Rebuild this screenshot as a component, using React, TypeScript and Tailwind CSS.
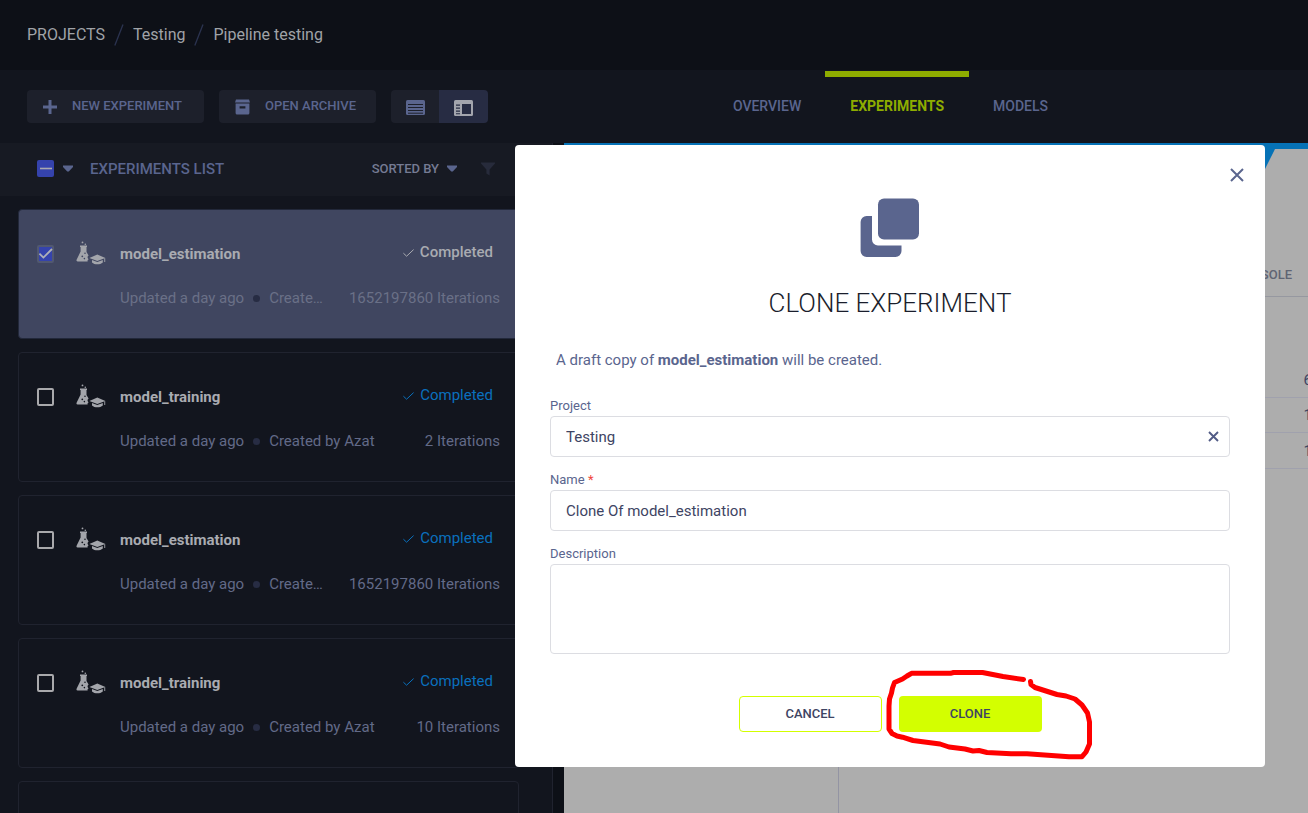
import React, { useEffect, useRef, useState } from "react";

type Experiment = {
  name: string;
  author: string;
  iterations: string;
};

const experiments: Experiment[] = [
  { name: "model_estimation", author: "Create…", iterations: "1652197860 Iterations" },
  { name: "model_training", author: "Created by Azat", iterations: "2 Iterations" },
  { name: "model_estimation", author: "Create…", iterations: "1652197860 Iterations" },
  { name: "model_training", author: "Created by Azat", iterations: "10 Iterations" },
];

function Caret() {
  return (
    <svg width="10" height="7" viewBox="0 0 10 7" aria-hidden="true">
      <path d="M0 0.5H10V2L5.8 6.6H4.2L0 2Z" fill="#5a658e" />
    </svg>
  );
}

function FlaskCapIcon() {
  return (
    <svg width="30" height="24" viewBox="0 0 30 24" fill="#a3a5ab" aria-hidden="true">
      <circle cx="6.5" cy="1.4" r="0.9" />
      <circle cx="9.3" cy="3.2" r="0.8" />
      <path
        fillRule="evenodd"
        d="M4 4.6H11V6H10.5V11L12.6 14.5C11 15.6 11.4 17.4 12.6 18.2L11.6 19.2V20.4H1.6C0.5 20.4 0.2 19.4 0.7 18.4L4.6 10.6V6H4ZM6.3 14.4a0.9 0.9 0 1 0 0 1.8a0.9 0.9 0 1 0 0-1.8ZM9 11.4a0.8 0.8 0 1 0 0 1.6a0.8 0.8 0 1 0 0-1.6ZM8.4 16.8a0.8 0.8 0 1 0 0 1.6a0.8 0.8 0 1 0 0-1.6Z"
      />
      <path d="M13.4 17L21.3 13.6L29.4 17L21.3 20Z" />
      <path d="M16 19L21.3 21L26.8 19V21.4C24 24 18.6 24 16 21.4Z" />
      <path d="M28.3 17.2H29.2V21H28.3Z" />
    </svg>
  );
}

function RowCheckbox({ checked, label, onChange }: { checked: boolean; label: string; onChange: () => void }) {
  return (
    <span className="grid size-[17px] shrink-0">
      <input
        type="checkbox"
        aria-label={label}
        checked={checked}
        onChange={onChange}
        className="col-start-1 row-start-1 m-0 h-[18px] w-[17px] appearance-none rounded-xs border-2 border-[#a9a9ac] checked:border-[#515871] checked:bg-[#3543ad]"
      />
      {checked && (
        <svg className="pointer-events-none col-start-1 row-start-1" width="17" height="17" viewBox="0 0 17 17" aria-hidden="true">
          <path d="M2.4 8.6L6.4 12.6L15 4" fill="none" stroke="#aeb0b8" strokeWidth="1.8" />
        </svg>
      )}
    </span>
  );
}

function ExperimentCard({
  item,
  selected,
  onToggle,
}: {
  item: Experiment;
  selected: boolean;
  onToggle: () => void;
}) {
  return (
    <li
      className={
        selected
          ? "flex h-[130px] shrink-0 rounded-sm border border-[#22283a] bg-[#404660] pt-8 pr-[18px] pl-[18px]"
          : "flex h-[130px] shrink-0 rounded-sm border border-[#20232f] bg-[#12151e] pt-8 pr-[18px] pl-[18px]"
      }
    >
      <div className="pt-[3px]">
        <RowCheckbox checked={selected} label={"Select " + item.name} onChange={onToggle} />
      </div>
      <div className="-mt-px ml-[22px] w-[44px] shrink-0">
        <FlaskCapIcon />
      </div>
      <div className="min-w-0 flex-1">
        <div className="flex items-start justify-between pr-[7px]">
          <h3 className="pt-[2px] text-[15px] leading-5 font-bold text-[#a9abb1]">{item.name}</h3>
          <span
            className={
              selected
                ? "flex items-center gap-[6px] text-[15px] leading-5 font-medium text-[#a9abb1]"
                : "flex items-center gap-[6px] text-[15px] leading-5 text-[#0a70bd]"
            }
          >
            <svg width="11" height="8" viewBox="0 0 11 8" className="mt-[2px]" aria-hidden="true">
              <path d="M0.4 4.2L3.6 7.2L10.6 0.6" fill="none" stroke="currentColor" strokeWidth="1" />
            </svg>
            Completed
          </span>
        </div>
        <div
          className={
            selected
              ? "mt-6 flex items-center text-[15px] leading-5 text-[#6a7087]"
              : "mt-6 flex items-center text-[15px] leading-5 text-[#626a88]"
          }
        >
          <span className="shrink-0">Updated a day ago</span>
          <span className="mx-[9px] size-[7px] shrink-0 rounded-full bg-[#272c43]" />
          <span className="shrink-0">{item.author}</span>
          <span className="ml-auto shrink-0">{item.iterations}</span>
        </div>
      </div>
    </li>
  );
}

function SelectAll() {
  const ref = useRef<HTMLInputElement>(null);
  useEffect(() => {
    if (ref.current) ref.current.indeterminate = true;
  }, []);
  return (
    <span className="grid size-[17px] shrink-0">
      <input
        ref={ref}
        type="checkbox"
        aria-label="Select all experiments"
        className="col-start-1 row-start-1 m-0 size-[17px] appearance-none rounded-xs bg-[#3543ad]"
      />
      <svg className="pointer-events-none col-start-1 row-start-1" width="17" height="17" viewBox="0 0 17 17" aria-hidden="true">
        <path d="M3 8.5H15" stroke="#aaa9b0" strokeWidth="1.6" />
      </svg>
    </span>
  );
}

function Slash() {
  return (
    <svg width="10" height="22" viewBox="0 0 10 22" aria-hidden="true">
      <path d="M0.8 21.5L9 0.5" stroke="#2b3350" strokeWidth="1.3" />
    </svg>
  );
}

function Header() {
  return (
    <header className="h-[70px] shrink-0 bg-[#0d1017] pt-6 pl-[27px]">
      <nav aria-label="Breadcrumb" className="flex items-center gap-[9px] text-[16px] leading-[22px] text-[#a0a3a8]">
        <a href="#projects">PROJECTS</a>
        <Slash />
        <a href="#testing">Testing</a>
        <Slash />
        <a href="#pipeline">Pipeline testing</a>
      </nav>
    </header>
  );
}

function Toolbar() {
  return (
    <div className="flex h-[73px] shrink-0 justify-between bg-[#12151e] pr-[236px] pl-[27px]">
      <div className="flex items-center gap-[15px] text-[13px] font-medium text-[#5a658e]">
        <button type="button" className="flex h-[33px] w-[177px] items-center gap-[15px] rounded-sm bg-[#1d202b] pl-4">
          <svg width="14" height="14" viewBox="0 0 14 14" aria-hidden="true">
            <path d="M7 0V14M0 7H14" stroke="#5a658e" strokeWidth="3" />
          </svg>
          <span className="pb-[2px]">NEW EXPERIMENT</span>
        </button>
        <button type="button" className="flex h-[33px] w-[157px] items-center gap-[15px] rounded-sm bg-[#1d202b] pl-4">
          <svg width="15" height="16" viewBox="0 0 15 16" fill="#5a658e" aria-hidden="true">
            <path d="M1 0.5H14L15 3.4H0Z" />
            <path fillRule="evenodd" d="M0.6 4.6H14.4V14A1.5 1.5 0 0 1 12.9 15.5H2.1A1.5 1.5 0 0 1 0.6 14ZM4.6 7.2V9.6H10.4V7.2Z" />
          </svg>
          <span className="pb-[2px]">OPEN ARCHIVE</span>
        </button>
        <div className="flex h-[33px] overflow-hidden rounded-sm">
          <button type="button" aria-label="Table view" className="grid w-12 place-items-center bg-[#1d202b]">
            <svg width="19" height="15" viewBox="0 0 19 15" className="mt-[2px]" aria-hidden="true">
              <rect width="19" height="15" rx="1.5" fill="#5a658e" />
              <path d="M2 4.500H17M2 7.500H17M2 10.500H17M2 13.200H17" stroke="#1d202b" strokeWidth="1" />
            </svg>
          </button>
          <button type="button" aria-label="Details view" className="grid w-[49px] place-items-center bg-[#272c43]">
            <svg width="19" height="16" viewBox="0 0 19 16" className="mt-[2px]" aria-hidden="true">
              <rect width="19" height="16" rx="1.5" fill="#a3a5ad" />
              <path d="M8 4H17V14H8ZM2 4.500H6V5.700H2ZM2 7.500H6V8.700H2ZM2 10.500H6V11.700H2ZM2 13.200H6V14.200H2Z" fill="#272c43" />
            </svg>
          </button>
        </div>
      </div>
      <nav aria-label="Views" className="flex pt-px text-[14px] leading-5 font-medium text-[#5a658e]">
        <a href="#overview" className="border-t-6 border-transparent px-6 pt-[19px]">OVERVIEW</a>
        <a href="#experiments" aria-current="page" className="border-t-6 border-[#8eac00] px-[25px] pt-[19px] font-bold text-[#8eac00]">
          EXPERIMENTS
        </a>
        <a href="#models" className="border-t-6 border-transparent px-6 pt-[19px]">MODELS</a>
      </nav>
    </div>
  );
}

function ExperimentList() {
  const [selected, setSelected] = useState<number[]>([0]);
  const toggle = (index: number) =>
    setSelected((current) => (current.includes(index) ? current.filter((i) => i !== index) : [...current, index]));
  return (
    <section className="flex w-[553px] shrink-0 flex-col border-r border-[#20232f] bg-[#12151e]">
      <div className="flex h-[53px] shrink-0 items-center bg-[#171a23] pr-[57px] pb-[2px] pl-[37px]">
        <SelectAll />
        <button type="button" aria-label="Selection options" className="ml-[9px]">
          <Caret />
        </button>
        <h2 className="ml-[17px] text-[15px] leading-5 font-medium text-[#5a658e]">EXPERIMENTS LIST</h2>
        <button type="button" className="ml-auto flex items-center gap-2 text-[13px] leading-5 font-medium text-[#757b93]">
          SORTED BY
          <Caret />
        </button>
        <button type="button" aria-label="Filter" className="ml-6">
          <svg width="14" height="14" viewBox="0 0 14 14" fill="#272b3b" aria-hidden="true">
            <path d="M0 0.5H14V1.5L8.6 7.5V13.5L5.4 11.5V7.5L0 1.5Z" />
          </svg>
        </button>
      </div>
      <ul className="flex flex-col gap-[13px] pt-[13px] pr-[33px] pl-[18px]">
        {experiments.map((item, index) => (
          <ExperimentCard key={index} item={item} selected={selected.includes(index)} onToggle={() => toggle(index)} />
        ))}
        <li className="h-[130px] shrink-0 rounded-sm border border-[#20232f]" />
      </ul>
    </section>
  );
}

function DetailsPanel() {
  return (
    <section className="ml-[11px] flex min-w-0 flex-1 flex-col overflow-hidden bg-[#adadad] text-[#5f6473]">
      <div className="flex h-[34px] shrink-0 justify-center">
        <div className="h-[6px] flex-1 bg-[#0672b6]" />
        <svg width="40" height="34" viewBox="0 0 40 34" className="shrink-0" aria-hidden="true">
          <path d="M0 0H40V6H24L10 34H0Z" fill="#0672b6" />
        </svg>
        <div className="h-[6px] w-[17px] shrink-0 bg-[#0672b6]" />
      </div>
      <div className="flex h-[120px] shrink-0 items-end justify-end border-b border-[#9698a0] pr-4 pb-[11px]">
        <a href="#console" className="text-[13px] leading-5 font-medium">CONSOLE</a>
      </div>
      <div className="flex flex-1">
        <div className="w-[275px] shrink-0 border-r border-[#9394a3]" />
        <ul className="flex-1 overflow-hidden pt-[66px] text-[15px] leading-5 text-[#3e4463]">
          <li className="flex h-[35px] items-center justify-end border-b border-[#a0a1ad]"><span className="-mr-1">6</span></li>
          <li className="flex h-[35px] items-center justify-end border-b border-[#a0a1ad]"><span className="-mr-1">1</span></li>
          <li className="flex h-[36px] items-center justify-end border-b border-[#a0a1ad]"><span className="-mr-1">1</span></li>
        </ul>
      </div>
    </section>
  );
}

function CloneDialog() {
  const [project, setProject] = useState("Testing");
  const [name, setName] = useState("Clone Of model_estimation");
  const [description, setDescription] = useState("");
  return (
    <div className="absolute inset-0 flex items-start justify-end pt-[145px] pr-[43px]">
      <div
        role="dialog"
        aria-labelledby="clone-title"
        className="flex w-[750px] flex-col rounded-sm bg-white px-[35px] pb-[35px] text-[#5a658e]"
      >
        <div className="-mr-[14px] flex h-[53px] justify-end pt-[23px]">
          <button type="button" aria-label="Close" className="size-[14px]">
            <svg width="14" height="14" viewBox="0 0 14 14" aria-hidden="true">
              <path d="M1 1L13 13M13 1L1 13" stroke="#5a658e" strokeWidth="2" />
            </svg>
          </button>
        </div>
        <svg width="60" height="60" viewBox="0 0 60 60" fill="#5a658e" className="self-center" aria-hidden="true">
          <rect x="18" y="0.5" width="41" height="41" rx="6" />
          <path d="M12 18H6.6A6 6 0 0 0 0.6 24V53A6 6 0 0 0 6.6 59H35.5A6 6 0 0 0 41.5 53V47.5H18A6 6 0 0 1 12 41.5Z" />
        </svg>
        <h1 id="clone-title" className="mt-[27px] text-center text-[26px] leading-9 font-light text-[#1a1e2c]">
          CLONE EXPERIMENT
        </h1>
        <p className="mt-[29px] pl-[6px] text-[15px] leading-5">
          A draft copy of <b>model_estimation</b> will be created.
        </p>
        <form className="flex flex-col pt-[26px]" onSubmit={(event) => event.preventDefault()}>
          <label htmlFor="project" className="text-[13px] leading-5">Project</label>
          <div className="flex h-[41px] items-center rounded-sm border border-[#dcdde2] pr-[10px]">
            <input
              id="project"
              value={project}
              onChange={(event) => setProject(event.target.value)}
              className="h-full min-w-0 flex-1 bg-transparent pl-[15px] text-[15px] text-[#3e4463] outline-none"
            />
            <button type="button" aria-label="Clear project" onClick={() => setProject("")}>
              <svg width="11" height="11" viewBox="0 0 11 11" aria-hidden="true">
                <path d="M1 1L10 10M10 1L1 10" stroke="#525c86" strokeWidth="1.9" />
              </svg>
            </button>
          </div>
          <label htmlFor="name" className="mt-[13px] text-[13px] leading-5">
            Name <span className="text-[#f0463c]">*</span>
          </label>
          <input
            id="name"
            value={name}
            onChange={(event) => setName(event.target.value)}
            className="h-[41px] rounded-sm border border-[#dcdde2] px-[15px] text-[15px] text-[#3e4463] outline-none"
          />
          <label htmlFor="description" className="mt-[13px] text-[13px] leading-5">Description</label>
          <textarea
            id="description"
            value={description}
            onChange={(event) => setDescription(event.target.value)}
            className="h-[90px] resize-none rounded-sm border border-[#dcdde2] px-[15px] py-2 text-[15px] text-[#3e4463] outline-none"
          />
          <div className="relative mt-[42px] flex justify-center gap-[17px] text-[13px] font-medium text-[#3e4463]">
            <button type="button" className="h-9 w-[143px] rounded-sm border border-[#d3ff00]">CANCEL</button>
            <button type="submit" className="h-9 w-[143px] rounded-sm bg-[#d3ff00]">CLONE</button>
            <svg
              className="pointer-events-none absolute -top-7 left-[335px]"
              width="210"
              height="94"
              viewBox="0 0 210 94"
              fill="none"
              stroke="#ff0000"
              strokeWidth="5"
              strokeLinecap="round"
              strokeLinejoin="round"
              aria-hidden="true"
            >
              <path d="M138.500 11.500L118 8.500L97.500 4.500H68.500L65.500 5.300H26.500L22 8L17.500 11L9.500 14.500L7.500 20L6.500 25L4.500 31L4 38V61L7 65.500L12 68L17.500 69.200L28 72.500L55 76L64 79L80 81L88 83L94 82.500L102 84.500L126 85.800H142L184 88.700L197 88.700L201 84L204.500 76V54L202.500 45L197 37L190 31L181 28L172 26.500L161 23L150 19.500L146 16.500L145.500 13.500" />
            </svg>
          </div>
        </form>
      </div>
    </div>
  );
}

export default function App() {
  return (
    <main className="relative flex h-screen flex-col overflow-hidden bg-[#0d1017] font-['Roboto',sans-serif]">
      <Header />
      <Toolbar />
      <div className="flex min-h-0 flex-1 overflow-hidden">
        <ExperimentList />
        <DetailsPanel />
      </div>
      <CloneDialog />
    </main>
  );
}
